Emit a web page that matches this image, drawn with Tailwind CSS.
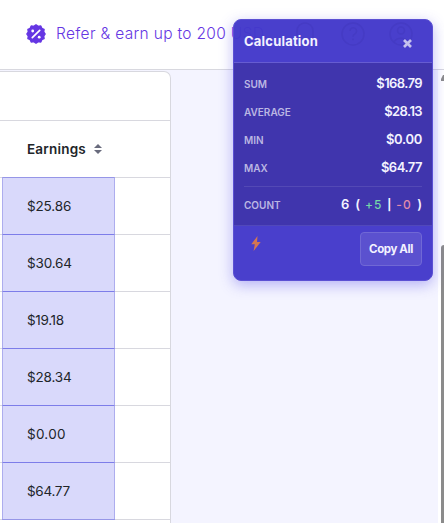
<!DOCTYPE html>
<html lang="en">
<head>
<meta charset="utf-8">
<title>Earnings</title>
<script src="https://cdn.jsdelivr.net/npm/@tailwindcss/browser@4"></script>
</head>
<body class="relative flex h-[523px] w-[444px] flex-col overflow-hidden bg-[#f4f4ff] font-['Inter',sans-serif] text-[#212529]">
  <header class="flex h-[70px] shrink-0 items-center border-b border-[#d8d8df] bg-white pl-[26px] pb-[2px]">
    <svg class="size-5 shrink-0" viewBox="0 0 20 20" fill="none">
      <path fill="#6536e3" stroke="#6536e3" stroke-width="1.6" stroke-linejoin="round" d="M10 1l2.100 1.500 2.600-.4 1 2.300 2.300 1-.4 2.600L19 10l-1.400 2 .4 2.600-2.300 1-1 2.300-2.600-.4L10 19l-2.100-1.500-2.600.4-1-2.300-2.300-1 .4-2.600L1 10l1.400-2-.4-2.600 2.300-1 1-2.300 2.600.4z"/>
      <path d="M6.3 13.7l7.4-7.4" stroke="#fff" stroke-width="1.7" stroke-linecap="round"/>
      <circle cx="6.7" cy="7" r="1.4" fill="#fff"/><circle cx="13.2" cy="13.2" r="1.4" fill="#fff"/>
    </svg>
    <span class="ml-[10px] whitespace-nowrap text-[15.5px] font-light tracking-[0.33px] text-[#6536e3]">Refer &amp; earn up to 200 USD</span>
  </header>

  <main class="flex min-h-0 flex-1 justify-between">
    <section class="mt-px w-[171px] rounded-tr-[7px] border-t border-r border-[#d8d8df] bg-white">
      <div class="h-[49px] border-b border-[#d8d8df]"></div>
      <div class="flex h-[56px] items-center pl-[27px]">
        <span class="w-[60px] whitespace-nowrap text-[13.5px] font-semibold tracking-[0.2px]">Earnings</span>
        <svg class="ml-[7px] h-[10px] w-[8px]" viewBox="0 0 8 10" fill="#696b7d"><path d="M4 0l4 4H0zM0 6h8l-4 4z"/></svg>
      </div>
      <div class="text-[13.5px] tracking-[-0.15px]">
        <div class="flex h-[57px] border-t border-[#d8d8df] pl-[2px]"><div class="-mt-px flex h-[57px] w-[113px] items-center border-x border-t border-x-[#adadee] border-t-[#9696e7] bg-[#d9d9fb] pl-[24px]">$25.86</div></div>
        <div class="flex h-[57px] border-t border-[#d8d8df] pl-[2px]"><div class="-mt-px flex h-[57px] w-[113px] items-center border-x border-t border-x-[#adadee] border-t-[#7d7de9] bg-[#d9d9fb] pl-[24px]">$30.64</div></div>
        <div class="flex h-[57px] border-t border-[#d8d8df] pl-[2px]"><div class="-mt-px flex h-[57px] w-[113px] items-center border-x border-t border-x-[#adadee] border-t-[#7d7de9] bg-[#d9d9fb] pl-[24px] tracking-[-0.35px]">$19.18</div></div>
        <div class="flex h-[57px] border-t border-[#d8d8df] pl-[2px]"><div class="-mt-px flex h-[57px] w-[113px] items-center border-x border-t border-x-[#adadee] border-t-[#7d7de9] bg-[#d9d9fb] pl-[24px]">$28.34</div></div>
        <div class="flex h-[57px] border-t border-[#d8d8df] pl-[2px]"><div class="-mt-px flex h-[57px] w-[113px] items-center border-x border-t border-x-[#adadee] border-t-[#7d7de9] bg-[#d9d9fb] pl-[24px] tracking-[0.25px]">$0.00</div></div>
        <div class="flex h-[57px] border-t border-[#d8d8df] pl-[2px]"><div class="-mt-px flex h-[57px] w-[113px] items-center border-x border-t border-x-[#adadee] border-t-[#7d7de9] bg-[#d9d9fb] pl-[24px] tracking-[-0.3px]">$64.77</div></div>
        <div class="h-[4px] border-t border-[#d8d8df] pl-[2px]"><div class="-mt-px h-px w-[113px] bg-[#9696e7]"></div></div>
      </div>
    </section>
    <aside class="flex w-[6px] flex-col bg-white pl-[3px]">
      <svg class="mt-[5px] h-[6px] w-[3px]" viewBox="0 0 3 6"><path fill="#8b8b8b" d="M0 6V4L2 0h1v6z"/></svg>
      <div class="mt-[164px] w-[3px] flex-1 rounded-tl-[3px] bg-[#8b8b8b]"></div>
    </aside>
  </main>

  <div class="absolute top-[19px] left-[233px] flex h-[262px] w-[200px] flex-col overflow-hidden rounded-[8px] border border-[#5b50d3] bg-[#4339ca]/97 text-white shadow-[0_4px_14px_rgba(79,70,229,0.38)]">
    <div class="relative flex h-[43px] shrink-0 items-center justify-between border-b border-[#665cd1] pt-[2px] pr-[20px] pl-[10px]">
      <svg class="absolute inset-0 h-[42px] w-[198px]" viewBox="234 20 198 42" fill="none" stroke="#453bc4" stroke-width="1.5">
        <path d="M297 39v-8a8 8 0 0 1 16 0v8M295 39h20M303 43h5"/>
        <circle cx="353" cy="34" r="11"/><path d="M350 31a3.3 3.3 0 1 1 5 2.8c-1.4.8-2 1.4-2 3M353 38.5v1.7"/>
        <circle cx="401" cy="34" r="11"/><circle cx="401" cy="30.5" r="3.5"/><path d="M394 42c3-5 11-5 14 0"/>
      </svg>
      <h2 class="relative whitespace-nowrap text-[13px] font-bold tracking-[0.2px] text-[#f3f2ff]">Calculation</h2>
      <svg class="relative mt-[2px] size-[9px]" viewBox="0 0 9 9"><path d="M1 1l7 7M8 1L1 8" stroke="#c5c1ee" stroke-width="2.7"/></svg>
    </div>
    <dl class="flex h-[163px] shrink-0 flex-col border-b border-[#5148bb] bg-[#4035ad] px-[10px] pt-[7px] text-[10px] font-semibold text-[#bbb7e3]">
      <div class="flex h-[28px] items-center justify-between"><dt>SUM</dt><dd class="text-[13px] tracking-[-0.6px] text-[#f3f2ff]">$168.79</dd></div>
      <div class="flex h-[28px] items-center justify-between"><dt>AVERAGE</dt><dd class="text-[13px] tracking-[-0.6px] text-[#f3f2ff]">$28.13</dd></div>
      <div class="flex h-[28px] items-center justify-between"><dt>MIN</dt><dd class="text-[13px] tracking-[-0.3px] text-[#f3f2ff]">$0.00</dd></div>
      <div class="flex h-[28px] items-center justify-between"><dt>MAX</dt><dd class="text-[13px] tracking-[-0.5px] text-[#f3f2ff]">$64.77</dd></div>
      <div class="mt-[4px] flex h-[38px] items-center justify-between border-t border-[#5349b5] pb-px"><dt>COUNT</dt><dd class="flex items-center text-[13px] text-[#f3f2ff]"><span>6</span><span class="ml-[6px]">(</span><span class="ml-[5px] text-[12px] font-medium tracking-[0.8px] text-[#75d7a9]">+5</span><span class="ml-[5px] text-[11px] font-bold">|</span><span class="ml-[5px] text-[12px] font-medium tracking-[1.3px] text-[#e08baa]">-0</span><span class="ml-[5px]">)</span></dd></div>
    </dl>
    <div class="flex flex-1 items-start justify-between pt-[6px] pr-[10px] pl-[17px]">
      <svg class="mt-[4px] h-[15px] w-[10px]" viewBox="0 0 10 15"><path fill="#d47651" d="M6.500 0L.3 8.300h3.500L2.600 15 9.700 6H6z"/></svg>
      <button class="h-[34px] w-[62px] rounded-[4px] border border-[#7068d5] bg-[#5b51cf] pt-px text-[11.5px] font-bold tracking-[-0.4px] whitespace-nowrap text-[#f3f2ff]">Copy All</button>
    </div>
  </div>
</body>
</html>
